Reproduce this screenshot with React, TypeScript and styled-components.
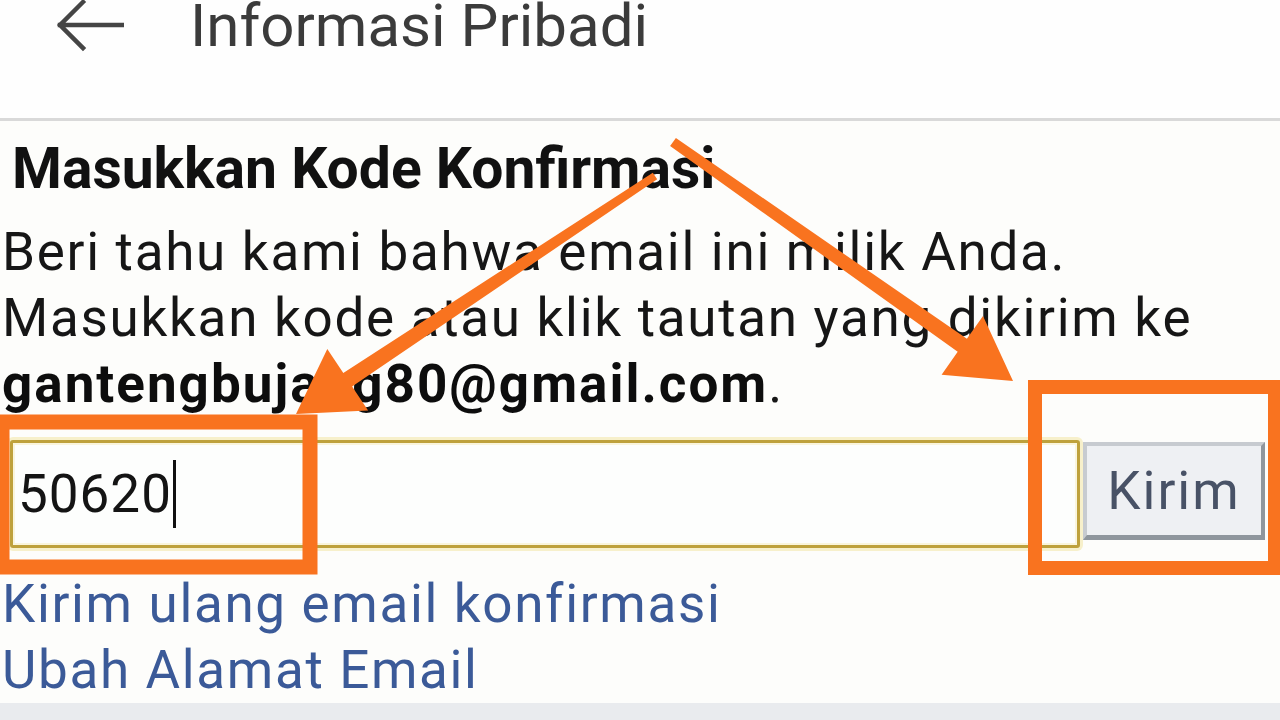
import React from "react";
import styled, { createGlobalStyle } from "styled-components";

const GlobalStyle = createGlobalStyle`
    html, body {
        margin: 0;
        padding: 0;
        background: #fdfdfb;
    }

    body {
        font-family: Roboto, "Liberation Sans", Arial, sans-serif;
        -webkit-font-smoothing: antialiased;
    }
`;

const ORANGE = "#f9731f";

const BackIcon: React.FC = () => (
    <svg width="68" height="52" viewBox="0 0 68 52" fill="none">
        <path
            d="M4 25 H66 M4 25 L27 2 M4 25 L27 48"
            stroke="#454545"
            strokeWidth="4.5"
            strokeLinecap="square"
        />
    </svg>
);

// orange arrows and boxes drawn over the screenshot
const Annotations: React.FC = () => (
    <Overlay width="1280" height="720" viewBox="0 0 1280 720">
        <rect x="2" y="422" width="308" height="145" fill="none" stroke={ORANGE} strokeWidth="15" />
        <rect x="1035" y="387" width="240" height="181" fill="none" stroke={ORANGE} strokeWidth="14" />
        <polygon
            fill={ORANGE}
            points="652.8,172.7 343.3,373 327.3,348.9 296,414 368.1,410.5 352.1,386.4 657.2,179.3"
        />
        <polygon
            fill={ORANGE}
            points="675.9,137.9 966.9,338.8 983,315.9 1013,381 941.6,374.7 957.7,351.8 670.1,146.1"
        />
    </Overlay>
);

const App: React.FC = () => {
    return (
        <Page>
            <GlobalStyle />
            <Header>
                <BackButton aria-label="Kembali">
                    <BackIcon />
                </BackButton>
                <Title>Informasi Pribadi</Title>
            </Header>

            <Content>
                <Heading>Masukkan Kode Konfirmasi</Heading>
                <Text>
                    Beri tahu kami bahwa email ini milik Anda.
                    <br />
                    Masukkan kode atau klik tautan yang dikirim ke
                    <br />
                    <strong>gantengbujang80@gmail.com</strong>.
                </Text>

                <CodeRow>
                    <CodeField role="textbox">
                        50620
                        <Caret />
                    </CodeField>
                    <SendButton>Kirim</SendButton>
                </CodeRow>

                <Links>
                    <TextLink href="#">Kirim ulang email konfirmasi</TextLink>
                    <TextLink href="#">Ubah Alamat Email</TextLink>
                </Links>
            </Content>

            <BottomBand />
            <Annotations />
        </Page>
    );
};

const Page = styled.div`
    position: relative;
    width: 1280px;
    height: 720px;
    overflow: hidden;
    display: flex;
    flex-direction: column;
    background: #fdfdfb;
`;

const Header = styled.header`
    height: 118px;
    flex-shrink: 0;
    display: flex;
    align-items: flex-start;
    padding-left: 56px;
    box-sizing: border-box;
    background: #fefefe;
`;

const BackButton = styled.button`
    border: 0;
    padding: 0;
    margin: 0;
    background: none;
    display: flex;
    height: 52px;
`;

const Title = styled.h1`
    margin: 1px 0 0 66px;
    font-size: 60px;
    line-height: 50px;
    font-weight: 400;
    color: #3b3b3b;
`;

const Content = styled.main`
    border-top: 3px solid #d9d9d9;
    padding: 19px 0 0 2px;
    display: flex;
    flex-direction: column;
`;

const Heading = styled.h2`
    margin: 0 0 21px 10px;
    font-size: 57px;
    line-height: 58px;
    font-weight: 700;
    color: #111111;
`;

const Text = styled.p`
    margin: 0;
    font-size: 53px;
    line-height: 66px;
    letter-spacing: 1.7px;
    color: #161616;

    strong {
        font-weight: 700;
        letter-spacing: 2px;
        color: #0d0d0d;
    }
`;

const CodeRow = styled.div`
    margin-top: 23px;
    padding-left: 8px;
    display: flex;
    align-items: flex-start;
`;

const CodeField = styled.div`
    width: 1070px;
    height: 108px;
    box-sizing: border-box;
    border: 3px solid #bea13c;
    border-radius: 3px;
    box-shadow: 0 0 0 3px #f7f0cb, inset 0 0 0 2px #faf5dc;
    background: #fdfefd;
    display: flex;
    align-items: center;
    padding-left: 5px;
    font-size: 53px;
    letter-spacing: 1px;
    color: #141414;
`;

const Caret = styled.span`
    display: inline-block;
    width: 3px;
    height: 68px;
    margin-left: 1px;
    background: #111111;
`;

const SendButton = styled.button`
    margin: 2px 0 0 3px;
    width: 182px;
    height: 98px;
    box-sizing: border-box;
    border-style: solid;
    border-width: 4px 4px 5px 4px;
    border-color: #c7cbd0 #8f969d #8f969d #c7cbd0;
    background: #eef0f3;
    font-family: Roboto, "Liberation Sans", Arial, sans-serif;
    font-size: 53px;
    letter-spacing: 2px;
    color: #485266;
    padding: 0;
`;

const Links = styled.nav`
    margin-top: 23px;
    display: flex;
    flex-direction: column;
`;

const TextLink = styled.a`
    font-size: 53px;
    line-height: 66px;
    letter-spacing: 1.65px;
    color: #3b5a98;
    text-decoration: none;
`;

const BottomBand = styled.div`
    margin-top: auto;
    height: 17px;
    background: #e9ebee;
`;

const Overlay = styled.svg`
    position: absolute;
    left: 0;
    top: 0;
    pointer-events: none;
`;

export default App;
